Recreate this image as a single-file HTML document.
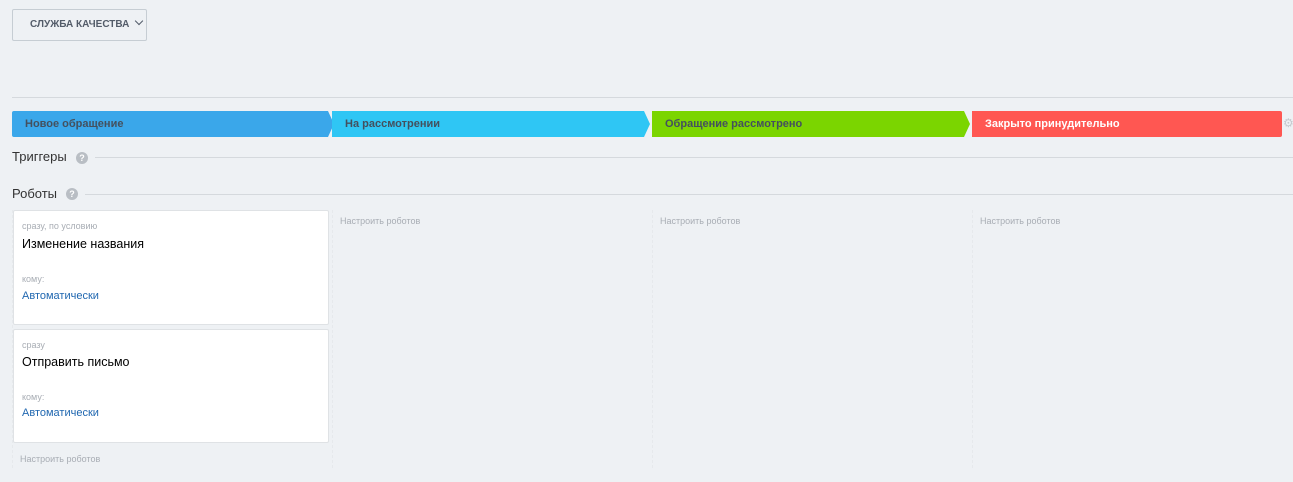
<!DOCTYPE html>
<html><head><meta charset="utf-8"><style>
*{margin:0;padding:0;box-sizing:border-box}
body{width:1293px;height:482px;background:#eef1f4;font-family:"Liberation Sans",sans-serif;position:relative;overflow:hidden}
.abs{position:absolute}
.btn{left:12px;top:9px;width:135px;height:32px;border:1px solid #c6cdd3;border-radius:2px;font-size:10px;font-weight:bold;color:#535c69;line-height:30px;padding-left:17px}
.hl{height:1px;background:#d5d9dd}
.stage{top:111px;height:26px;font-size:11px;font-weight:bold;line-height:26px;padding-left:13px;color:#44505e}
.stage:after{content:"";position:absolute;right:-6px;top:0;border-left:6px solid var(--c);border-top:13px solid transparent;border-bottom:13px solid transparent}
.ttl{font-size:13px;color:#333}
.q{width:12px;height:12px;border-radius:50%;background:#b9bec4;color:#fff;font-size:9px;font-weight:bold;text-align:center;line-height:12px}
.card{left:13px;width:316px;background:#fff;border:1px solid #dfe2e5;border-radius:2px}
.sm{font-size:9px;color:#a8adb4;position:absolute;left:8px}
.big{font-size:12.5px;color:#000;position:absolute;left:8px}
.lnk{font-size:11px;color:#2067b0;position:absolute;left:8px}
.set{font-size:9px;color:#a8adb4}
.dash{top:210px;height:258px;border-left:1px dashed #e6e9ec;width:0}
</style></head><body>
<div class="abs btn">СЛУЖБА КАЧЕСТВА <span style="display:inline-block;width:6px;height:6px;border-right:1px solid #535c69;border-bottom:1px solid #535c69;transform:rotate(45deg);margin-left:4px;position:relative;top:-3px"></span></div>
<div class="abs hl" style="left:12px;top:97px;width:1281px"></div>
<div class="abs stage" style="left:12px;width:316px;background:#3aa7ea;--c:#3aa7ea;border-radius:2px 0 0 2px">Новое обращение</div>
<div class="abs stage" style="left:332px;width:312px;background:#2fc6f4;--c:#2fc6f4">На рассмотрении</div>
<div class="abs stage" style="left:652px;width:312px;background:#7bd500;--c:#7bd500">Обращение рассмотрено</div>
<div class="abs stage" style="left:972px;width:310px;background:#ff5752;color:#fff;border-radius:0 2px 2px 0">Закрыто принудительно</div>
<div class="abs" style="left:1283px;top:116px;font-size:12px;color:#c5c9ce">⚙</div>
<div class="abs ttl" style="left:12px;top:149px">Триггеры</div>
<div class="abs q" style="left:76px;top:152px">?</div>
<div class="abs hl" style="left:95px;top:157px;width:1198px"></div>
<div class="abs ttl" style="left:12px;top:186px">Роботы</div>
<div class="abs q" style="left:66px;top:188px">?</div>
<div class="abs hl" style="left:85px;top:194px;width:1208px"></div>
<div class="abs dash" style="left:12px"></div>
<div class="abs dash" style="left:332px"></div>
<div class="abs dash" style="left:652px"></div>
<div class="abs dash" style="left:972px"></div>
<div class="abs card" style="top:210px;height:115px">
<div class="sm" style="top:10px">сразу, по условию</div>
<div class="big" style="top:26px">Изменение названия</div>
<div class="sm" style="top:63px">кому:</div>
<div class="lnk" style="top:79px">Автоматически</div></div>
<div class="abs card" style="top:329px;height:114px">
<div class="sm" style="top:10px">сразу</div>
<div class="big" style="top:25px">Отправить письмо</div>
<div class="sm" style="top:62px">кому:</div>
<div class="lnk" style="top:77px">Автоматически</div></div>
<div class="abs set" style="left:20px;top:454px">Настроить роботов</div>
<div class="abs set" style="left:340px;top:216px">Настроить роботов</div>
<div class="abs set" style="left:660px;top:216px">Настроить роботов</div>
<div class="abs set" style="left:980px;top:216px">Настроить роботов</div>
</body></html>
